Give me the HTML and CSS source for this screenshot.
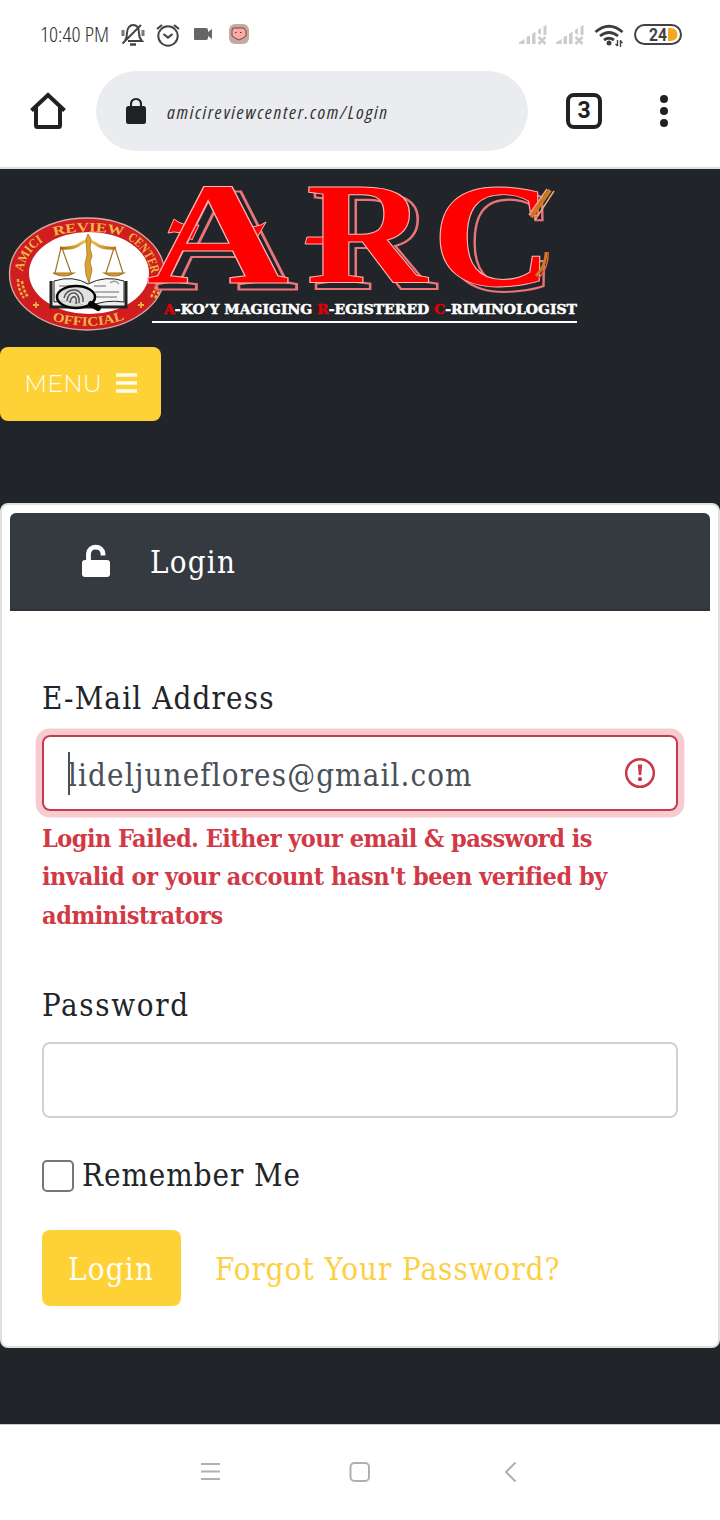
FILE: index.html
```html
<!DOCTYPE html>
<html lang="en">
<head>
<meta charset="utf-8">
<title>Login</title>
<link rel="stylesheet" href="styles.css">
</head>
<body>
<header class="browser">
  <div class="status">
    <svg class="status-left" width="260" height="70" viewBox="0 0 260 70">
      <text class="hand" x="40" y="42" font-size="20" textLength="69" lengthAdjust="spacingAndGlyphs">10:40 PM</text>
      <g fill="none" stroke="#444" stroke-width="2">
        <path d="M125 40.500C127 38 127 36 127 33C127 28 130 25 133 25C137 25 139 28 139 33C139 37 140 39 142 41H128M122.500 43.500L141 25"/>
        <path d="M123 30V36M143 30V36" stroke-width="3" stroke="#777"/>
        <path d="M130 44.500H136" stroke-width="2.500"/>
        <circle cx="168" cy="36" r="9.700"/>
        <path d="M163.500 34L168 37.500L172.500 34M157 29L162 25M179 29L174 25" stroke-width="2.200"/>
      </g>
      <path d="M195 28H206Q208 28 208 30V32L212 29V39L208 36V38Q208 40 206 40H195Q194 40 194 39V29Q194 28 195 28Z" fill="#666"/>
      <rect x="229" y="24" width="20" height="20" rx="6" fill="#c4aaa0"/>
      <path d="M233 28H244L246 31V36L243 38L239 40L235 38L232 36V30Z" fill="#f9aaa4" stroke="#73483f" stroke-width="1"/>
      <path d="M235 32.500H236.500M240 32.500H241.500" stroke="#5b3434"/>
    </svg>
    <svg class="status-right" width="220" height="70" viewBox="500 0 220 70">
      <g id="signal" fill="#ccc">
        <path d="M519 44V42.500L524.500 39V44ZM526.500 37L530 35.500V44H526.500ZM532 34L535.500 31.500V44H532ZM538 30L541 28V35L538 33ZM543.500 26.500L546.500 25V35H543.500Z"/>
        <path d="M538.500 37L545.500 44M545.500 37L538.500 44" stroke="#ccc" stroke-width="2.500"/>
      </g>
      <use href="#signal" x="37"/>
      <g fill="none" stroke="#3d3d3d" stroke-width="2.800">
        <path d="M595.500 32Q609 20.500 622.500 32M600 36Q609 29 618 36M604 40Q609 36.500 614 40"/>
      </g>
      <circle cx="609" cy="43" r="2.500" fill="#3d3d3d"/>
      <path d="M617.500 40V46M620.500 40V47M615.500 44L617.500 46M620.500 41L622.500 43" stroke="#444" fill="none" stroke-width="1.400"/>
      <rect x="635" y="25" width="46" height="19" rx="9.500" fill="#fff" stroke="#424242" stroke-width="2"/>
      <path d="M668 28H671Q677.500 29 677.500 34.500T671 41H668Z" fill="#f5a623"/>
      <text class="battery" x="649" y="41" textLength="18" lengthAdjust="spacingAndGlyphs">24</text>
    </svg>
  </div>
  <div class="toolbar">
    <svg class="home" width="36" height="38" viewBox="0 0 36 38"><path d="M1.500 18.500L18 3L34.500 18.500M6 15V33.500Q6 35 7.500 35H28.500Q30 35 30 33.500V15" fill="none" stroke="#202124" stroke-width="4"/></svg>
    <div class="address">
      <svg width="270" height="48" viewBox="0 0 270 48">
        <rect x="0" y="19" width="20" height="18" rx="2.500" fill="#202124"/>
        <path d="M5 20V17.500Q5 12 10 12T15 17.500V20" fill="none" stroke="#202124" stroke-width="2"/>
        <text class="hand url" x="41" y="32" font-size="19" textLength="220" lengthAdjust="spacing">amicireviewcenter.com/Login</text>
      </svg>
    </div>
    <div class="tabs">3</div>
    <svg class="more" width="10" height="36" viewBox="0 0 10 36" fill="#202124"><circle cx="5" cy="6" r="4"/><circle cx="5" cy="18" r="4"/><circle cx="5" cy="30" r="4"/></svg>
  </div>
</header>
<main class="page">
  <svg class="logo" width="600" height="170" viewBox="0 170 600 170">
    <defs>
      <path id="ring-left" d="M23 272Q27 250 46 240"/>
      <path id="ring-top" d="M54 236Q88 227 124 236"/>
      <path id="ring-right" d="M127 239Q147 250 152 276"/>
      <path id="ring-bottom" d="M52 320Q88 332 126 319"/>
      <linearGradient id="gold"><stop offset="0" stop-color="#a86708"/><stop offset=".5" stop-color="#f6cf62"/><stop offset="1" stop-color="#b66c10"/></linearGradient>
    </defs>
    <ellipse cx="87" cy="274" rx="77.500" ry="56" fill="#cf1d20" stroke="#d9a8a5" stroke-width="1.300"/>
    <ellipse cx="89" cy="273" rx="60" ry="41" fill="#fff"/>
    <text class="seal"><textPath href="#ring-left" textLength="38" lengthAdjust="spacingAndGlyphs">AMICI</textPath></text>
    <text class="seal"><textPath href="#ring-top" textLength="70" lengthAdjust="spacingAndGlyphs">REVIEW</textPath></text>
    <text class="seal"><textPath href="#ring-right" textLength="44" lengthAdjust="spacingAndGlyphs">CENTER</textPath></text>
    <text class="seal"><textPath href="#ring-bottom" textLength="74" lengthAdjust="spacingAndGlyphs">OFFICIAL</textPath></text>
    <path d="M18 279Q18 290 24 298M22 281Q23 290 28 297M151 297Q156 290 157 281M155 298Q161 290 162 281" fill="none" stroke="#e6b044" stroke-width="2.500" stroke-dasharray="3 1.500"/>
    <path d="M33 305H39M36 302V308M138 305H144M141 302V308" stroke="#e6b044" stroke-width="1.800"/>
    <g fill="#f6f6f6" stroke="#222">
      <path d="M51 281V307H126V281" stroke-width="3" fill="#eee"/>
      <path d="M54 281Q73 275 88 284Q105 275 124 281V302Q105 299 88 307Q72 299 54 302Z"/>
      <path d="M59 286H80M59 290H80M94 286H106M95 292H119M95 297H117M110 283Q115 279 119 284" fill="none" stroke="#999" stroke-width="1.300"/>
    </g>
    <g fill="none" stroke="#a67324" stroke-width="1.200">
      <path d="M61 248L55 273M62 248L71 273M114 248L106 273M115 248L123 273"/>
      <path d="M60 248Q74 249 80 244Q88 238 96 244Q102 249 116 248" stroke="url(#gold)" stroke-width="3"/>
      <path d="M53 273H74Q64 279 53 273ZM104 273H124Q114 279 104 273Z" fill="#d89b2c"/>
      <path d="M86 239L88 234L91 239L90 248L92 256L90 262L92 270L89 283L86 275L85 264L87 255Z" fill="#d9a232" stroke-width=".8"/>
    </g>
    <ellipse cx="76" cy="297" rx="19" ry="11" fill="#ddd" fill-opacity=".85" stroke="#050505" stroke-width="2.500"/>
    <path d="M64 298Q66 289 76 290Q84 293 83 302M67 301Q68 292 75 293Q80 296 79 303M70 303Q71 296 75 297Q77 299 76 304" fill="none" stroke="#555" stroke-width="1.500"/>
    <path d="M91 304L98 308" stroke="#050505" stroke-width="6" stroke-linecap="round"/>
    <g class="shadow-letters">
      <text transform="translate(155 289) scale(1.330 1)" font-size="149">A</text>
      <text transform="translate(312 289) scale(1.150 1)" font-size="149">R</text>
      <text transform="translate(441 291) scale(1.070 1)" font-size="149">C</text>
    </g>
    <path class="ornaments" d="M174 219Q183 227 199 225L192 240Q180 229 168 233ZM239 226Q257 229 266 222L258 236Q250 231 243 239ZM307 237H326V244H305Z"/>
    <g class="main-letters">
      <text transform="translate(146 283) scale(1.350 1)" font-size="147">A</text>
      <text transform="translate(306 283) scale(1.140 1)" font-size="147">R</text>
      <text transform="translate(432 286) scale(1.120 1)" font-size="149">C</text>
    </g>
    <g fill="none">
      <path d="M531 217L550 190" stroke="#c77b1c" stroke-width="4"/>
      <path d="M529 215L547 189M535 220L554 191" stroke="#f4a08e" stroke-width="1.500"/>
      <path d="M536 276Q546 266 546 252" stroke="#c77b1c" stroke-width="3"/>
      <path d="M539 278Q549 267 548 252" stroke="#ef5a50" stroke-width="1.500"/>
    </g>
    <text class="motto" x="164" y="314" textLength="413" lengthAdjust="spacingAndGlyphs"><tspan class="initial">A</tspan>-KO’Y MAGIGING <tspan class="initial">R</tspan>-EGISTERED <tspan class="initial">C</tspan>-RIMINOLOGIST</text>
    <path d="M152 322H577" stroke="#fff" stroke-width="2"/>
  </svg>
  <button class="menu"><span>MENU</span><svg width="22" height="20" viewBox="0 0 22 20"><path d="M0 2H21M0 10H21M0 18H21" stroke="#fffdf0" stroke-width="3.400"/></svg></button>
  <section class="card">
    <h1 class="card-head">
      <svg width="30" height="34" viewBox="0 0 30 34"><rect x="1" y="16" width="28" height="17" rx="3" fill="#fff"/><path d="M7.500 18V9.500A7.300 7.300 0 0 1 22 9.500V11.500" fill="none" stroke="#fff" stroke-width="4.800" stroke-linecap="butt"/></svg>
      <span class="t-login">Login</span>
    </h1>
    <form class="form">
      <label class="label"><span class="t-email">E-Mail Address</span></label>
      <div class="input invalid"><i class="caret"></i><span class="t-value">lideljuneflores@gmail.com</span>
        <svg width="32" height="32" viewBox="0 0 32 32"><circle cx="16" cy="16" r="13.800" fill="none" stroke="#cb3545" stroke-width="2.500"/><path d="M13.800 7.500H18.200L17.200 18H14.800Z" fill="#cb3545"/><circle cx="16" cy="22.200" r="2.100" fill="#cb3545"/></svg>
      </div>
      <p class="error"><span class="e1">Login Failed. Either your email &amp; password is</span><br><span class="e2">invalid or your account hasn't been verified by</span><br><span class="e3">administrators</span></p>
      <label class="label password"><span class="t-pass">Password</span></label>
      <div class="input"></div>
      <label class="remember"><i class="checkbox"></i><span class="t-remember">Remember Me</span></label>
      <div class="actions"><button type="button" class="submit"><span class="t-login">Login</span></button><a class="forgot t-forgot">Forgot Your Password?</a></div>
    </form>
  </section>
</main>
<nav class="system">
  <svg width="720" height="94" viewBox="0 1425 720 94" fill="none" stroke="#b0b0b0" stroke-width="2"><path d="M201 1464H220M201 1471.500H220M201 1479H220M515.500 1462.500L506 1472L515.500 1481.500"/><rect x="350.500" y="1463" width="18.500" height="18" rx="4"/></svg>
</nav>
</body>
</html>
```
FILE: styles.css
```css
* { box-sizing: border-box; }
body { margin: 0; width: 720px; height: 1520px; display: flex; flex-direction: column; background: #212529; color: #212529; font-family: "Roboto Slab", "DejaVu Serif Condensed", "DejaVu Serif", serif; font-stretch: condensed; font-size: 31px; overflow: hidden; }
svg { display: block; flex: none; }
button { border: 0; font: inherit; }
.browser { height: 169px; flex: none; background: #fff; border-bottom: 2px solid #dcdedd; }
.status { height: 70px; display: flex; justify-content: space-between; }
.hand { font-family: "Open Sans", sans-serif; font-stretch: condensed; font-weight: 300; fill: #333; }
.url { font-style: italic; font-weight: 400; }
.battery { font: bold 18px Roboto, sans-serif; fill: #424242; }
.toolbar { height: 82px; display: flex; align-items: center; padding: 0 32px 0 30px; }
.address { width: 432px; height: 80px; margin-left: 30px; border-radius: 40px; background: #ebecf0; padding: 16px 0 0 30px; }
.tabs { width: 36px; height: 36px; margin-left: 38px; border: 4px solid #202124; border-radius: 8px; font: bold 23px/28px Roboto, sans-serif; text-align: center; color: #202124; }
.more { margin-left: 57px; }
.page { height: 1255px; flex: none; padding-top: 1px; }
.logo { overflow: visible; }
.menu { display: flex; align-items: center; gap: 14px; width: 161px; height: 74px; margin-top: 7px; padding: 0 0 2px 24px; border-radius: 8px; background: #fed136; color: #fffdf0; font: 300 24px Montserrat, Inter, sans-serif; }
.menu span { width: 78px; white-space: nowrap; }
.card { height: 845px; margin-top: 82px; padding: 8px; border: 2px solid #dfdfdf; border-radius: 8px; background: #fff; }
.card-head { height: 98px; margin: 0; padding: 0 0 0 71px; display: flex; align-items: center; gap: 39px; font-size: 31px; font-weight: 400; color: #fff; background: #343a40; border-bottom: 2px solid #2e343a; border-radius: 6px 6px 0 0; }
.t-login { letter-spacing: 1.200px; padding-top: 2px; }
.submit .t-login { display: block; }
.t-email { letter-spacing: 1.150px; }
.t-value { letter-spacing: 1.120px; }
.t-pass { letter-spacing: 1.650px; }
.t-remember { letter-spacing: .950px; margin-top: -2px; }
.form { padding: 63px 32px 0; }
.label { display: flex; align-items: center; height: 48px; margin-bottom: 13px; }
.input { position: relative; display: flex; align-items: center; height: 76px; padding: 3px 20px 0 24px; border: 2px solid #d2d2d4; border-radius: 8px; }
.input svg { margin: -4px 0 0 auto; }
.invalid { border-color: #c63b4a; box-shadow: 0 0 0 6.400px #f7cbd0; color: #495057; }
.caret { position: absolute; left: 24px; top: 15px; width: 2px; height: 43px; background: #495057; }
.error { margin: 9px 0 46px; font-size: 25px; line-height: 38.400px; font-weight: 700; color: #d23947; white-space: nowrap; }
.e1 { letter-spacing: -.540px; }
.e2, .e3 { letter-spacing: -.450px; }
.remember { display: flex; align-items: center; gap: 8px; height: 48px; margin-top: 34px; }
.checkbox { width: 32px; height: 32px; border: 2px solid #767676; border-radius: 5px; }
.actions { display: flex; align-items: center; gap: 34px; margin-top: 30px; }
.submit { width: 139px; height: 76px; padding: 0 0 0 26px; text-align: left; border-radius: 8px; background: #fed136; color: #fffdf0; }
.forgot { color: #fbd043; white-space: nowrap; letter-spacing: 1px; padding-top: 2px; }
.seal { font: 700 13px "Liberation Serif", serif; fill: #eeb747; }
.main-letters, .ornaments { fill: #f00; stroke: #ffb5b5; stroke-width: 1; font-family: "Liberation Serif", serif; font-weight: 700; }
.shadow-letters { fill: #212529; stroke: #e87579; stroke-width: 2.200; font-family: "Liberation Serif", serif; font-weight: 700; }
.motto { font: 900 13px "DejaVu Serif", serif; fill: #fff; stroke: #fff; stroke-width: .5; }
.initial { fill: #e00008; stroke: #e00008; }
.system { height: 96px; flex: none; background: #fff; border-top: 1px solid #c9cbcc; }
```
